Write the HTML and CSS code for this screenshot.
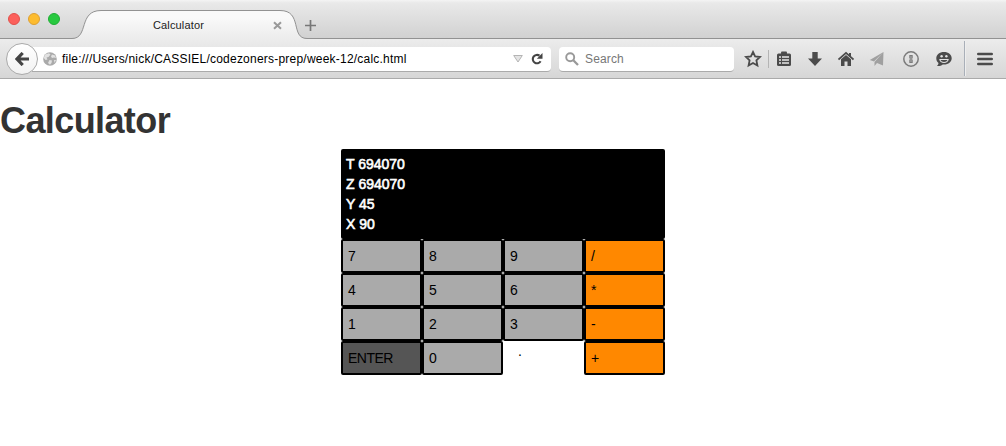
FILE: index.html
```html
<!DOCTYPE html>
<html lang="en">
<head>
<meta charset="utf-8">
<title>Calculator</title>
<link rel="stylesheet" href="styles.css">
</head>
<body>
<header class="browser">
  <div class="tabstrip">
    <div class="lights"><i class="light red"></i><i class="light amber"></i><i class="light green"></i></div>
    <div class="tab">
      <svg class="tab-shape" width="242" height="39" viewBox="0 0 242 39">
        <defs><linearGradient id="tabfill" x1="0" y1="0" x2="0" y2="1"><stop offset="0.25" stop-color="#f9f9f9"/><stop offset="1" stop-color="#ececec"/></linearGradient></defs>
        <path d="M0 39V38.5H3C20 38.5 9 10.500 32 10.500H211C234 10.500 221 38.5 238 38.5H242V39Z" fill="url(#tabfill)"/>
        <path d="M0 38.500H3C20 38.5 9 10.500 32 10.500H211C234 10.500 221 38.5 238 38.5H242" fill="none" stroke="#929292"/>
      </svg>
      <span class="tab-title">Calculator</span>
      <svg class="tab-close" width="9" height="9" viewBox="0 0 9 9"><path d="M1 1.200L8 7.800M8 1.200L1 7.800" stroke="#999" stroke-width="2"/></svg>
    </div>
    <svg class="new-tab" width="11" height="11" viewBox="0 0 11 11"><path d="M5.500 0V11M0 5.500H11" stroke="#777" stroke-width="1.700"/></svg>
  </div>
  <div class="toolbar">
    <div class="back"><svg width="14" height="14" viewBox="0 0 14 14"><path d="M7.700 1L2 7L7.700 13M2.500 7H14" fill="none" stroke="#444" stroke-width="3.200"/></svg></div>
    <div class="urlbar">
      <svg class="globe" width="14" height="14" viewBox="0 0 14 14"><circle cx="7" cy="7" r="6.800" fill="#aaa"/><path d="M2 2.500L6 1.200L7.500 2.500L5.500 5L3.500 5.500L4.500 7.500L2.500 8L0.800 6ZM9 2.500L12 3.500L13 6L11 5.500L9 6L8 4.500ZM6.500 8L9 8.500L8.500 11L7 12.800L5 11ZM11 8L13 8L11.500 11Z" fill="#e2e2e2"/></svg>
      <span class="url">file:///Users/nick/CASSIEL/codezoners-prep/week-12/calc.html</span>
      <svg class="drop" width="10" height="8" viewBox="0 0 10 8"><path d="M.7.5H9.300L5 7Z" fill="#e4e4e4" stroke="#b4b4b4"/></svg>
      <svg class="reload" width="12" height="12" viewBox="0 0 12 12"><path d="M8.500 2.700A4.200 4.200 0 1 0 9.600 8.200" fill="none" stroke="#444" stroke-width="2.100"/><path d="M11.500 0V5.800H5.800Z" fill="#444"/></svg>
    </div>
    <div class="search">
      <svg width="14" height="14" viewBox="0 0 14 14"><circle cx="5.200" cy="5.200" r="4" fill="none" stroke="#999" stroke-width="1.900"/><path d="M8.300 8.300L13 13" stroke="#999" stroke-width="2.300"/></svg>
      <span>Search</span>
    </div>
    <div class="icons">
      <svg class="star" width="18" height="18" viewBox="0 0 18 18"><path d="M9 2L11.100 6.500L16 7L12.400 10.400L13.400 15.500L9 13L4.600 15.500L5.600 10.400L2 7L6.900 6.500Z" fill="none" stroke="#4b4b4b" stroke-width="1.800"/></svg>
      <i class="mini-rule"></i>
      <svg width="16" height="16" viewBox="0 0 16 16"><rect x="1" y="2.500" width="14" height="12.500" rx="1.500" fill="#4b4b4b"/><rect x="5" y=".5" width="6" height="3" rx="1" fill="#4b4b4b"/><path d="M3 6H5M6 6H13M3 9H5M6 9H13M3 12H5M6 12H13" stroke="#e7e7e7" stroke-width="1.600"/></svg>
      <svg width="16" height="16" viewBox="0 0 16 16"><path d="M5.300 1H10.700V7.500H15L8 15L1 7.500H5.300Z" fill="#4b4b4b"/></svg>
      <svg width="16" height="16" viewBox="0 0 16 16"><path d="M.5 8.500L8 1.800L15.500 8.500" fill="none" stroke="#4b4b4b" stroke-width="1.700"/><path d="M3 8.300L8 4L13 8.300V15H9.500V10.500H6.500V15H3ZM11 2H13V6L11 4Z" fill="#4b4b4b"/></svg>
      <svg width="16" height="16" viewBox="0 0 16 16"><path d="M14.500 1L.8 9L5 10.500ZM14.500 1L5.500 11V15L8 12L14 14.500Z" fill="#a0a0a0"/></svg>
      <svg width="16" height="16" viewBox="0 0 16 16"><circle cx="8" cy="8" r="7.200" fill="none" stroke="#7b7b7b" stroke-width="1.500"/><path d="M6.300 4H9.700V7L9 8L9.700 9V12H6.300V9L7 8L6.300 7Z" fill="#7b7b7b"/><path d="M8 5V11" stroke="#bbb" stroke-width=".8"/></svg>
      <svg width="16" height="16" viewBox="0 0 16 16"><path d="M8 1C12.500 1 15.700 3.700 15.700 7.300C15.700 11 12.500 13.600 8 13.600L6.700 13.500C5 15 3 15.300 1 15C2 14 2.500 13 2.500 12C1 10.800.3 9.300.3 7.300C.3 3.700 3.500 1 8 1Z" fill="#4b4b4b"/><path d="M3.200 8H12.800C12.500 10.500 10.500 12 8 12S3.500 10.500 3.200 8Z" fill="#e2e2e2"/><path d="M4.500 9H11.500C11 10.300 9.700 11 8 11S5 10.300 4.500 9Z" fill="#4b4b4b"/><circle cx="5.600" cy="5.300" r="1.200" fill="#e2e2e2"/><circle cx="10.400" cy="5.300" r="1.200" fill="#e2e2e2"/></svg>
      <i class="menu-rule"></i>
      <svg width="16" height="14" viewBox="0 0 16 14"><path d="M1.300 2H14.700M1.300 7H14.700M1.300 12H14.700" stroke="#4b4b4b" stroke-width="2.600" stroke-linecap="round"/></svg>
    </div>
  </div>
</header>
<main>
  <h1>Calculator</h1>
  <div class="calculator">
    <div class="display"><div>T 694070</div><div>Z 694070</div><div>Y 45</div><div>X 90</div></div>
    <div class="key">7</div><div class="key">8</div><div class="key">9</div><div class="key op">/</div>
    <div class="key">4</div><div class="key">5</div><div class="key">6</div><div class="key op">*</div>
    <div class="key">1</div><div class="key">2</div><div class="key">3</div><div class="key op">-</div>
    <div class="key enter">ENTER</div><div class="key">0</div><div class="point">.</div><div class="key op">+</div>
  </div>
</main>
</body>
</html>
```
FILE: styles.css
```css
* { box-sizing: border-box; }
body { margin: 0; background: #fff; color: #333; font: 14px/20px "Liberation Sans", Arial, sans-serif; }
svg { display: block; flex: none; }
.browser { height: 79px; }
.tabstrip { display: flex; height: 39px; background: linear-gradient(#f4f4f4 0, #e9e9e9 3px, #d1d1d1 38px); box-shadow: inset 0 -1px #929292; }
.lights { display: flex; gap: 8px; padding: 13px 0 0 8px; width: 69px; }
.light { width: 12px; height: 12px; border-radius: 50%; border: 1px solid; }
.red { background: #fc605b; border-color: #e2504b; }
.amber { background: #fdbc2f; border-color: #dea032; }
.green { background: #28c940; border-color: #20ae35; }
.tab { display: grid; width: 242px; height: 39px; }
.tab > * { grid-area: 1 / 1; }
.tab-title { padding: 15px 0 0 84px; font-size: 11px; line-height: 20px; letter-spacing: .15px; color: #222; }
.tab-close { margin: 21px 0 0 204px; }
.new-tab { margin: 20px 0 0 -6px; }
.toolbar { display: flex; height: 40px; padding-left: 6px; background: linear-gradient(#ececec, #d6d6d6); border-bottom: 1px solid #aaa; }
.back { display: flex; align-items: center; justify-content: center; width: 32px; height: 32px; margin-top: 4px; border: 1px solid #aaa; border-radius: 50%; background: linear-gradient(#fff, #f2f2f2); z-index: 1; }
.urlbar { display: flex; align-items: center; width: 519px; height: 25px; margin: 8px 0 0 -6px; padding: 0 8px 0 11px; background: #fff; border-bottom: 1px solid #aaa; border-radius: 0 4px 4px 0; color: #000; }
.url { width: 345px; margin-left: 5px; font-size: 12px; letter-spacing: .22px; white-space: nowrap; }
.drop { margin-left: 106px; }
.reload { margin-left: 8px; }
.search { display: flex; align-items: center; gap: 6px; width: 175px; height: 25px; margin: 8px 0 0 8px; padding-left: 6px; background: #fff; border-bottom: 1px solid #aaa; border-radius: 4px; font-size: 12px; letter-spacing: .15px; color: #777; }
.icons { display: grid; grid-template-columns: 24px 8px 31px 31px 31px 34px 33px 28px 13px 16px; align-items: center; margin-left: 10px; height: 39px; }
.mini-rule { width: 1px; height: 18px; background: #b4b4b4; }
.menu-rule { width: 1px; height: 35px; background: #a9afb8; box-shadow: 1px 0 #eee; }
h1 { margin: 22px 0 8px; font-size: 36px; line-height: 40px; font-weight: 700; letter-spacing: -.6px; }
.calculator { display: grid; grid-template-columns: repeat(4, 81px); width: 324px; margin: 0 auto; color: #000; }
.display { grid-column: 1 / -1; height: 90px; padding: 5px; background: #000; color: #fff; border-radius: 2px; -webkit-text-stroke: .6px #fff; }
.key { height: 34px; padding: 5px; border: 2px solid #000; border-radius: 2px; background: #aaa; }
.op { background: #ff8800; padding-left: 5px; }
.enter { background: #555; letter-spacing: -.5px; }
.point { padding: 0 0 0 15px; line-height: 20px; }
```
